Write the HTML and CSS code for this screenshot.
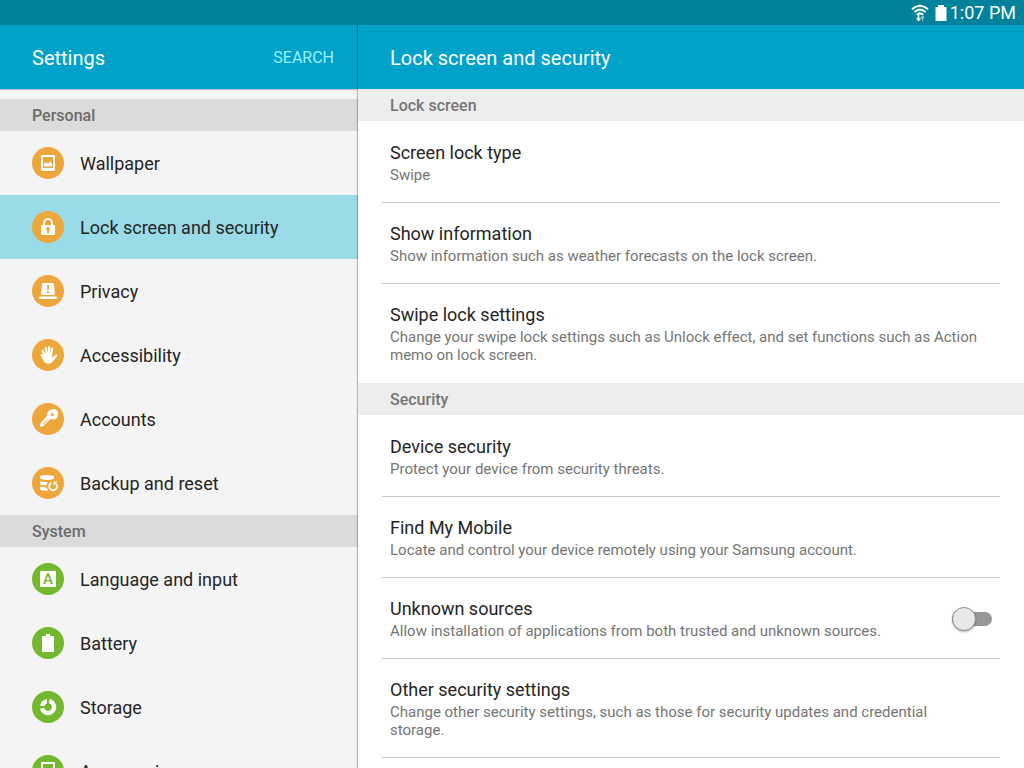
FILE: index.html
```html
<!DOCTYPE html>
<html lang="en">
<head>
  <meta charset="UTF-8" />
  <meta name="viewport" content="width=device-width, initial-scale=1.0" />
  <title>Settings | Lock screen and security</title>
  <link rel="stylesheet" href="styles.css">
</head>
<body>
  <div class="status-bar">
    <svg class="wifi" width="18" height="18" viewBox="0 0 18 18" fill="none" stroke="#fff" stroke-width="2">
      <path d="M1 5.200Q9-1.600 17 5.200" />
      <path d="M3.400 8Q9 3.200 14.600 8" />
      <path d="M5.800 10.800Q9 8 12.200 10.800" />
      <path d="M7.500 11v5M5.600 14.200l1.900 2.200 1.900-2.200" stroke-width="1.500" />
      <path d="M11.500 17v-4.600M9.800 14.200l1.700-2 1.700 2" stroke="#8fcbd8" stroke-width="1.200" />
    </svg>
    <svg class="cell" width="12" height="16" viewBox="0 0 12 16">
      <path fill="#fff" d="M3 0h6v2h2.500v14H.5V2H3z" />
    </svg>
    <span class="clock">1:07 PM</span>
  </div>

  <div class="panes">
    <aside class="sidebar">
      <header class="top-bar">
        <h1>Settings</h1>
        <button class="search" type="button">SEARCH</button>
      </header>

      <nav class="menu">
        <h2 class="section-title">Personal</h2>
        <a class="menu-item" href="#wallpaper">
          <svg class="icon" viewBox="0 0 32 32">
            <circle cx="16" cy="16" r="16" />
            <path fill="#fff" fill-rule="evenodd" d="M10 8h12a1 1 0 0 1 1 1v14a1 1 0 0 1-1 1H10a1 1 0 0 1-1-1V9a1 1 0 0 1 1-1zM11 10v11h10V10z" />
            <path fill="#fff" d="M12 19.500v-2.500l2-2 2 1.800 2.300-2.300 1.700 2.500v2.500z" />
          </svg>
          <span>Wallpaper</span>
        </a>
        <a class="menu-item selected" href="#lock">
          <svg class="icon" viewBox="0 0 32 32">
            <circle cx="16" cy="16" r="16" />
            <path fill="none" stroke="#fff" stroke-width="2" d="M12 15v-3a4 4 0 0 1 8 0v3" />
            <rect x="9" y="14" width="14" height="10" rx="1" fill="#fff" />
            <path d="M16 16a1.900 1.900 0 0 1 1 3.500V22h-2v-2.500a1.900 1.900 0 0 1 1-3.500z" />
          </svg>
          <span>Lock screen and security</span>
        </a>
        <a class="menu-item" href="#privacy">
          <svg class="icon" viewBox="0 0 32 32">
            <circle cx="16" cy="16" r="16" />
            <path fill="#fff" d="M11 8h10q.8 0 .9.800L23 20H9l1.100-11.200Q10.200 8 11 8z" />
            <rect x="7" y="21.500" width="18" height="2.500" rx="1" fill="#fff" />
            <path d="M15 10h2.200l-.4 5h-1.500zM15 16.200h2v1.800h-2z" />
          </svg>
          <span>Privacy</span>
        </a>
        <a class="menu-item" href="#accessibility">
          <svg class="icon" viewBox="0 0 32 32">
            <circle cx="16" cy="16" r="16" />
            <path fill="none" stroke="#fff" stroke-width="2.200" stroke-linecap="round" d="M13.500 17l-3-5M15 15.500L13.700 9M17 15.500V8.200M19 16l1.200-6.500M21.500 20l2.500-3.500" />
            <path fill="#fff" d="M9.200 15q1.200-.2 2 1l1 1.200 1-2.700 6.800.3.200 4.200 1.500-1.500 1.700 1.500-3 4q-1.200 1.800-3.900 1.800-3.500 0-4.900-3l-3-5.600q-.3-1 .6-1.200z" />
          </svg>
          <span>Accessibility</span>
        </a>
        <a class="menu-item" href="#accounts">
          <svg class="icon" viewBox="0 0 32 32">
            <circle cx="16" cy="16" r="16" />
            <path fill="#fff" d="M17.500 7.200q1-.9 2.200-.9h3q1.200 0 2 1l.8 1q.7 1 .5 2.200l-.5 3q-.3 1.200-1.300 1.900l-1.500.9q-1.300.5-2.700 0l-1.500-.3-8.300 8-2.200-.6-.1-2.300 7.200-8.400q-.5-1.500.1-2.700z" />
            <circle cx="20.500" cy="11.500" r="1.500" />
            <path fill="none" stroke="#eca63a" d="M11 21.500l4.500-4.800" />
          </svg>
          <span>Accounts</span>
        </a>
        <a class="menu-item" href="#backup">
          <svg class="icon" viewBox="0 0 32 32">
            <circle cx="16" cy="16" r="16" />
            <path fill="#fff" d="M8 9.500Q8 8 15 8t7 1.500v1.800Q21 13 15 13t-7-1.700zM8 14.200q2.500.9 8 .9-1.200 1.300-1.400 3.400Q8 18.500 8 16.800zM8 19.500q2.500.9 6.800.9.500 2 1.800 3.200Q8 24 8 22z" />
            <path fill="none" stroke="#fff" stroke-width="1.800" d="M19.500 15.800a3.900 3.900 0 1 0 4.500 1" />
            <path fill="#fff" d="M21.300 14.500h4.200l-3.700 4z" />
          </svg>
          <span>Backup and reset</span>
        </a>

        <h2 class="section-title">System</h2>
        <a class="menu-item system" href="#language">
          <svg class="icon" viewBox="0 0 32 32">
            <circle cx="16" cy="16" r="16" />
            <rect x="8" y="8" width="16" height="16" rx="1" fill="#fff" />
            <text class="letter" x="16" y="21" text-anchor="middle">A</text>
          </svg>
          <span>Language and input</span>
        </a>
        <a class="menu-item system" href="#battery">
          <svg class="icon" viewBox="0 0 32 32">
            <circle cx="16" cy="16" r="16" />
            <path fill="#fff" d="M14 7h4v2h3.200q.8 0 .8.800V24q0 1-1 1H11q-1 0-1-1V9.800q0-.8.8-.8H14z" />
          </svg>
          <span>Battery</span>
        </a>
        <a class="menu-item system" href="#storage">
          <svg class="icon" viewBox="0 0 32 32">
            <circle cx="16" cy="16" r="16" />
            <path fill="none" stroke="#fff" stroke-width="4.500" d="M17.200 10.100a6 6 0 1 1-7.100 7.100" />
            <path fill="#fff" d="M15 8v6.500L14.500 15H8q.8-5.800 7-7z" />
            <circle cx="16" cy="16" r="3.500" />
          </svg>
          <span>Storage</span>
        </a>
        <a class="menu-item system" href="#accessories">
          <svg class="icon" viewBox="0 0 32 32">
            <circle cx="16" cy="16" r="16" />
            <rect x="10" y="8" width="12" height="14" fill="none" stroke="#fff" stroke-width="2" />
            <path fill="#fff" d="M13 22h6v3h-6z" />
          </svg>
          <span>Accessories</span>
        </a>
      </nav>
    </aside>

    <main class="detail">
      <header class="top-bar">
        <h1>Lock screen and security</h1>
      </header>

      <div class="options">
        <h2 class="section-title">Lock screen</h2>
        <a class="option" href="#lock-type">
          <span class="option-name">Screen lock type</span>
          <span class="option-info">Swipe</span>
        </a>
        <a class="option" href="#show-info">
          <span class="option-name">Show information</span>
          <span class="option-info">Show information such as weather forecasts on the lock screen.</span>
        </a>
        <a class="option" href="#swipe-lock">
          <span class="option-name">Swipe lock settings</span>
          <span class="option-info">Change your swipe lock settings such as Unlock effect, and set functions such as Action memo on lock screen.</span>
        </a>

        <h2 class="section-title">Security</h2>
        <a class="option" href="#device-security">
          <span class="option-name">Device security</span>
          <span class="option-info">Protect your device from security threats.</span>
        </a>
        <a class="option" href="#find-my-mobile">
          <span class="option-name">Find My Mobile</span>
          <span class="option-info">Locate and control your device remotely using your Samsung account.</span>
        </a>
        <div class="option with-switch">
          <label for="unknownSources">
            <span class="option-name">Unknown sources</span>
            <span class="option-info">Allow installation of applications from both trusted and unknown sources.</span>
          </label>
          <input class="switch" type="checkbox" id="unknownSources">
        </div>
        <a class="option" href="#other-security">
          <span class="option-name">Other security settings</span>
          <span class="option-info">Change other security settings, such as those for security updates and credential storage.</span>
        </a>
        <div class="option"></div>
      </div>
    </main>
  </div>
</body>
</html>
```
FILE: styles.css
```css
:root {
  --bar: #00a2ca;
  --status: #00829c;
  --orange: #eca63a;
  --green: #73b82e;
  --text: #252525;
  --muted: #757575;
}

* {
  box-sizing: border-box;
  margin: 0;
  padding: 0;
}

body {
  display: flex;
  flex-direction: column;
  height: 100vh;
  overflow: hidden;
  background: #fff;
  color: var(--text);
  font-family: Roboto, sans-serif;
}

a {
  color: inherit;
  text-decoration: none;
}

.status-bar {
  display: flex;
  align-items: center;
  justify-content: flex-end;
  flex: none;
  height: 25px;
  padding-right: 8px;
  background: var(--status);
  color: #fff;
}

.wifi {
  margin-right: 6px;
}

.cell {
  margin-right: 3px;
}

.clock {
  font-size: 18px;
}

.panes {
  display: flex;
  flex: 1;
  min-height: 0;
}

.sidebar {
  flex: 0 0 358px;
  overflow: hidden;
  background: #f4f4f4;
}

/* sits above the sidebar so its edge shadow shows */
.detail {
  position: relative;
  flex: 1;
  overflow: hidden;
  background: #fff;
  box-shadow: -1px 0 1px rgba(0, 0, 0, 0.25);
}

.top-bar {
  display: flex;
  align-items: center;
  justify-content: space-between;
  height: 64px;
  padding: 0 24px 0 32px;
  background: var(--bar);
  color: #fff;
  box-shadow: 0 1px 1px rgba(0, 0, 0, 0.2);
}

h1 {
  padding-top: 2px;
  font-size: 20px;
  font-weight: 400;
}

.search {
  border: none;
  background: none;
  color: #97f2f2;
  font-family: inherit;
  font-size: 16px;
  cursor: pointer;
}

.section-title {
  height: 32px;
  padding-left: 32px;
  background: #ededed;
  color: var(--muted);
  font-size: 16px;
  font-weight: 500;
  line-height: 34px;
}

.menu {
  padding-top: 10px;
}

.menu .section-title {
  background: #dbdbdb;
  color: #6b6b6b;
}

.menu-item {
  display: flex;
  align-items: center;
  gap: 16px;
  height: 64px;
  padding-left: 32px;
  font-size: 18px;
}

.menu-item.selected {
  background: #99dbe7;
}

.icon {
  width: 32px;
  height: 32px;
  fill: var(--orange);
}

.system .icon {
  fill: var(--green);
}

.letter {
  font-size: 15px;
  font-weight: 500;
}

.option {
  display: block;
  margin: 0 24px;
  padding: 19px 8px 18px;
  border-top: 1px solid #c9c9c9;
}

.section-title + .option {
  border-color: transparent;
}

.option + .section-title {
  margin-top: 1px;
}

.option-name,
.option-info {
  display: block;
}

.option-name {
  font-size: 18px;
  line-height: 24px;
}

.option-info {
  margin-top: 1px;
  padding-right: 8px;
  color: var(--muted);
  font-size: 15px;
  line-height: 18px;
}

.with-switch {
  display: flex;
  align-items: center;
  justify-content: space-between;
}

/* the knob is taller than the track and overflows it */
.switch {
  appearance: none;
  display: flex;
  align-items: center;
  width: 40px;
  height: 14px;
  border-radius: 7px;
  background: #979797;
  cursor: pointer;
}

.switch::before {
  content: "";
  flex: none;
  width: 22px;
  height: 22px;
  border: 1px solid #8c8c8c;
  border-radius: 50%;
  background: #e8e8e8;
  box-shadow: 0 1px 2px rgba(0, 0, 0, 0.3);
}

.switch:checked {
  justify-content: flex-end;
}
```
